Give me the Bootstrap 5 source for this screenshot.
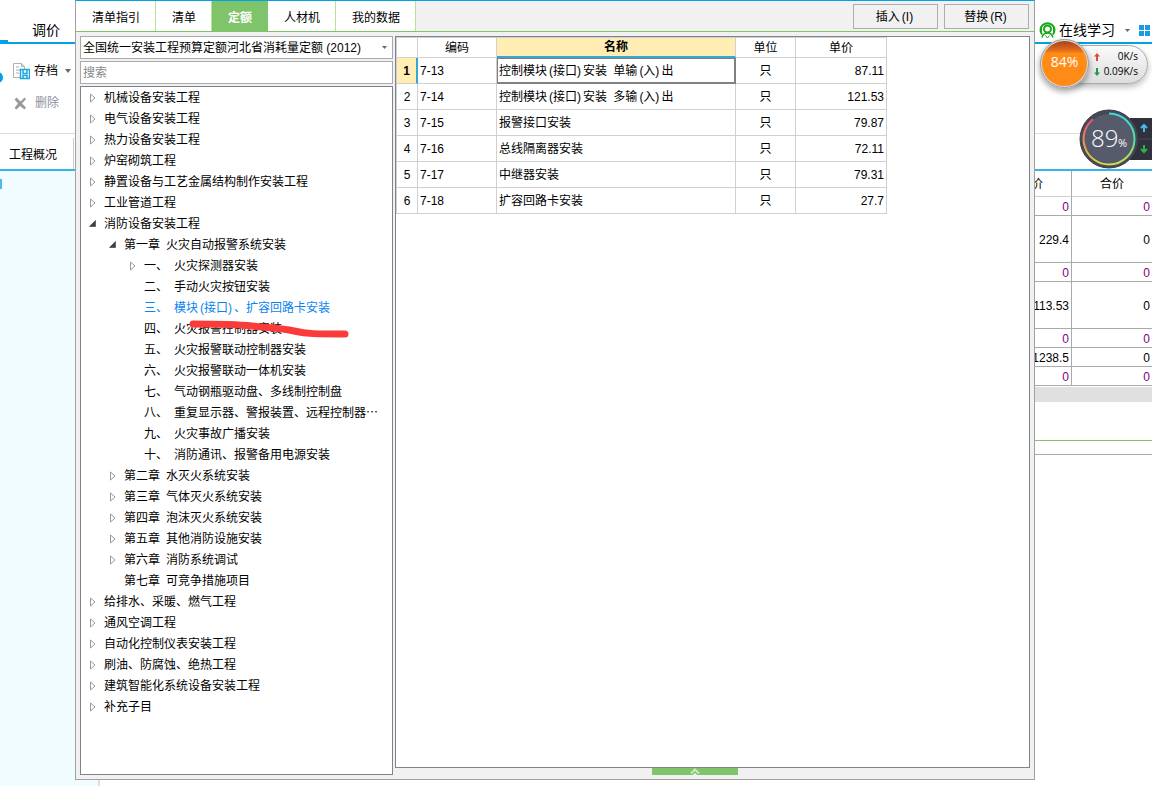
<!DOCTYPE html>
<html lang="zh-CN">
<head>
<meta charset="utf-8">
<meta name="viewport" content="width=device-width, initial-scale=1">
<title>定额查询</title>
<link href="https://cdn.jsdelivr.net/npm/bootstrap@5.3.0/dist/css/bootstrap.min.css" rel="stylesheet">
<style>
:root{--sky:#00a2e8;--leaf:#7fc36b;--line:#d0d0d0;--frame:#7f8390;--ice:#f0fcff}
body{font:12px/20px "Liberation Sans","Noto Sans CJK SC",sans-serif;color:#000;background:#fff}
button,input,select{font:inherit;color:inherit;border-radius:0}
.shell{min-height:100vh}
/* left window strip */
.side-l{width:75px}
.side-l .title-tab{height:44px;border-bottom:2px solid var(--sky);font-size:14px;padding:20px 0 0 32px}
.title-tab::before{content:"";position:absolute;left:0;bottom:0;width:8px;height:2px;background:var(--sky)}
.tools{height:90px;border-bottom:1px solid #ddd;padding:11px 4px 0 13px}
.tools button{height:32px;border:0;background:none;padding:0;text-align:left}
.knob{left:-8px;top:28px;width:11px;height:11px;border-radius:50%;background:var(--sky)}
.proj{height:37px;border-bottom:2px solid #35b4e8;padding:4px 1px 0 0}
.proj a{border-right:1px solid #ccc;padding:7px 0 0 9px;color:#000}
.pane{background:var(--ice)}
.chip{width:2px;height:10px;margin-top:8px;background:#53b7ea}
/* dialog */
.dlg{background:#f1f1f1;border:1px solid #a0a0a0;border-top-color:var(--sky)}
.tabs{height:31px;border-bottom:1px solid var(--leaf)}
.tabs .tab{background:#fff;border:0;border-right:1px solid #b5e39c;padding:4px 15px 0 16px}
.tabs .tab.active{background:var(--leaf);color:#fff;font-weight:bold;border-color:var(--leaf)}
.cmds{gap:6px;padding:3px 5px 0 0}
.cmd{width:85px;height:25px;border:1px solid #adadad;background:#f1f1f1;padding:0}
.work{padding:4px 4px 4px}
.left{width:313px}
.combo,.find{height:23px;border:1px solid #aaa;background:#fff;padding:0 2px;width:100%;outline:0}
.combo{appearance:none;background:#fff url("data:image/svg+xml,%3Csvg xmlns='http://www.w3.org/2000/svg' width='5' height='3'%3E%3Cpath d='M0 0h5L2.5 3z' fill='%23666677'/%3E%3C/svg%3E") no-repeat right 5px center}
.find{margin:2px 0}
.find::placeholder{color:#888;opacity:1}
.tree{border:1px solid var(--frame);background:#fff;padding-top:1px}
.tree ul{list-style:none;margin:0;padding:0 0 0 20px}
.tree>ul{padding-left:8px}
.node{height:21px;display:flex;align-items:center;white-space:nowrap;line-height:21px}
.node::before{content:"";width:15px;height:11px;flex:none}
.node.shut::before{background:url("data:image/svg+xml,%3Csvg xmlns='http://www.w3.org/2000/svg' width='8' height='11'%3E%3Cpath d='M1.5 1v8l4.5-4z' fill='white' stroke='%23999'/%3E%3C/svg%3E") no-repeat}
.node.open::before{background:url("data:image/svg+xml,%3Csvg xmlns='http://www.w3.org/2000/svg' width='8' height='11'%3E%3Cpath d='M6.500 1.500v6H.5z' fill='%23404040' stroke='%23222' stroke-width='.5'/%3E%3C/svg%3E") no-repeat}
.node b{font-weight:normal;margin-right:6px}
.node.on{color:#0a84f0}
.br{margin:0 2px}
.sp{margin-left:3px}
.scrawl{left:105px;top:230px;width:166px;height:26px;pointer-events:none}
.sheet{border:1px solid var(--frame);background:#fff}
.quota{width:491px;table-layout:fixed;border-collapse:separate;border-spacing:0;border-left:1px solid var(--line);border-top:1px solid var(--line)}
.quota th,.quota td{border-right:1px solid var(--line);border-bottom:1px solid var(--line);height:26px;padding:0 2px;font-weight:normal;white-space:nowrap}
.quota thead th{height:20px;line-height:18px;text-align:center}
.quota th{text-align:center;padding:0}
.quota td:nth-child(4){text-align:center}
.quota td:nth-child(5){text-align:right}
.quota thead th.hot{background:#ffedb3;font-weight:bold;border-bottom:2px solid #35a7d7}
.quota tbody th.hot{background:#ffedb3;font-weight:bold;border-right:2px solid #35a7d7}
.quota td.cur{border:2px solid #808080;border-top-width:1px;border-left-width:1px;padding-left:1px}
.grip{width:86px;height:7px;background:var(--leaf);border:0;padding:0}
.under{height:6px}
.under div{width:25px;background:var(--ice);border-right:2px solid #ddd}
/* right window strip */
.side-r{width:117px}
.learn{height:44px;border-bottom:2px solid var(--sky);padding:18px 2px 0 4px;font-size:14px}
.learn a{color:#000;margin-left:3px}
.gap-r{height:90px;border-bottom:1px solid #ddd}
.gap-b{height:37px;border-bottom:2px solid #35b4e8}
.sums{width:163px;flex:none;table-layout:fixed;border-collapse:separate;border-spacing:0}
.sums th{height:26px;font-weight:normal;text-align:center;border-bottom:1px solid var(--line)}
.sums th:first-child{text-align:right;padding-right:28px}
.sums td{height:19px;line-height:16px;padding:2px 2px 0;text-align:right;border-bottom:1px solid #aaa;color:#800080}
.sums tr>:first-child{border-right:1px solid #aaa}
.sums .tall td{height:47px}
.sums .blk td{color:#000}
.bar{height:15px;margin-top:1px;background:#e0e0e0}
.rule-g{height:39px;border-bottom:1px solid var(--leaf)}
.rule-k{height:14px;border-bottom:1px solid #aaa}
.pill{left:26px;top:45px;width:87px;height:39px;border-radius:20px;background:linear-gradient(#fafafa,#ddd);border:1px solid #aaa;box-shadow:0 3px 6px #0004;font:10px/15px "Open Sans","Noto Sans CJK SC",sans-serif;padding:3px 9px 0 0;text-align:right}
.ball{left:5px;top:39px;width:49px;height:49px;border-radius:50%;border:2px solid #ddd;outline:1px solid #999;outline-offset:-1px;background:linear-gradient(#a8401a,#e06a1c 20%,#ff8c14 28%,#ff8a18);box-shadow:0 3px 6px #0006;color:#fff;font:14px/42px "Open Sans",sans-serif;text-align:center}
.dock{left:95px;top:118px;width:22px;height:42px;background:#2f323c}
.dial{left:44px;top:109px;width:60px;height:60px}
.dial span{position:absolute;color:#fff;font-family:"Open Sans",sans-serif;font-weight:300}
.dial .big{left:12px;top:14px;font-size:24px;line-height:30px}
.dial .pc{left:39px;top:25px;font-size:11px;line-height:18px;font-weight:400}
</style>
</head>
<body>
<div class="shell d-flex overflow-hidden">

  <aside class="side-l d-flex flex-column flex-shrink-0">
    <div class="title-tab position-relative">调价</div>
    <div class="tools d-flex flex-column position-relative">
      <i class="knob position-absolute"></i>
      <button class="d-flex align-items-center text-nowrap" type="button">
        <svg width="17" height="17" viewBox="0 0 17 17" class="me-1" fill="none"><path d="M7 14.500H.5V.5h8l3 3V6M8.500.500v3h3M3 4h3M3 7h4M3 10h3" stroke="#b0b0b0"/><path d="M7.500 6.500h9v9h-9z" fill="#fff" stroke="#1aa7dd" stroke-width="1.500"/><path d="M10 7v3.500h4V7M10 15v-2.500h4V15" stroke="#1aa7dd" stroke-width="1.500"/></svg>存档
        <svg width="6" height="4" class="ms-auto"><path d="M0 0h6L3 4z" fill="#667"/></svg>
      </button>
      <button class="d-flex align-items-center text-nowrap" type="button" style="color:#8c90a0">
        <svg width="14" height="13" viewBox="0 0 13 13" class="ms-0 me-2"><path d="M1 2.500 3 .5l4 4 4-4 1.500 1.500-4 4.500 4 4-1.500 2L6.500 9 3 12.500 1 11l3.500-4.500z" fill="#999"/></svg>删除
      </button>
    </div>
    <div class="proj d-flex"><a href="#" class="flex-fill text-decoration-none text-nowrap">工程概况</a></div>
    <div class="pane flex-fill"><div class="chip"></div></div>
  </aside>

  <main class="flex-fill d-flex flex-column">
    <section class="dlg flex-fill d-flex flex-column">
      <nav class="tabs d-flex">
        <button class="tab" type="button">清单指引</button>
        <button class="tab" type="button">清单</button>
        <button class="tab active" type="button">定额</button>
        <button class="tab" type="button">人材机</button>
        <button class="tab" type="button">我的数据</button>
        <div class="cmds ms-auto d-flex align-items-start">
          <button class="cmd" type="button">插入<span class="br">(I)</span></button>
          <button class="cmd" type="button">替换<span class="br">(R)</span></button>
        </div>
      </nav>
      <div class="work flex-fill d-flex" style="gap:2px">
        <div class="left d-flex flex-column flex-shrink-0">
          <select class="combo" aria-label="定额库"><option>全国统一安装工程预算定额河北省消耗量定额 (2012)</option></select>
          <input class="find" type="text" placeholder="搜索" aria-label="搜索">
          <div class="tree flex-fill position-relative">
            <ul>
              <li><div class="node shut">机械设备安装工程</div></li>
              <li><div class="node shut">电气设备安装工程</div></li>
              <li><div class="node shut">热力设备安装工程</div></li>
              <li><div class="node shut">炉窑砌筑工程</div></li>
              <li><div class="node shut">静置设备与工艺金属结构制作安装工程</div></li>
              <li><div class="node shut">工业管道工程</div></li>
              <li><div class="node open">消防设备安装工程</div>
                <ul>
                  <li><div class="node open"><b>第一章</b>火灾自动报警系统安装</div>
                    <ul>
                      <li><div class="node shut"><b>一、</b>火灾探测器安装</div></li>
                      <li><div class="node"><b>二、</b>手动火灾按钮安装</div></li>
                      <li><div class="node on"><b>三、</b>模块<span class="br">(接口)</span>、扩容回路卡安装</div></li>
                      <li><div class="node"><b>四、</b>火灾报警控制器安装</div></li>
                      <li><div class="node"><b>五、</b>火灾报警联动控制器安装</div></li>
                      <li><div class="node"><b>六、</b>火灾报警联动一体机安装</div></li>
                      <li><div class="node"><b>七、</b>气动钢瓶驱动盘、多线制控制盘</div></li>
                      <li><div class="node"><b>八、</b>重复显示器、警报装置、远程控制器⋯</div></li>
                      <li><div class="node"><b>九、</b>火灾事故广播安装</div></li>
                      <li><div class="node"><b>十、</b>消防通讯、报警备用电源安装</div></li>
                    </ul>
                  </li>
                  <li><div class="node shut"><b>第二章</b>水灭火系统安装</div></li>
                  <li><div class="node shut"><b>第三章</b>气体灭火系统安装</div></li>
                  <li><div class="node shut"><b>第四章</b>泡沫灭火系统安装</div></li>
                  <li><div class="node shut"><b>第五章</b>其他消防设施安装</div></li>
                  <li><div class="node shut"><b>第六章</b>消防系统调试</div></li>
                  <li><div class="node"><b>第七章</b>可竞争措施项目</div></li>
                </ul>
              </li>
              <li><div class="node shut">给排水、采暖、燃气工程</div></li>
              <li><div class="node shut">通风空调工程</div></li>
              <li><div class="node shut">自动化控制仪表安装工程</div></li>
              <li><div class="node shut">刷油、防腐蚀、绝热工程</div></li>
              <li><div class="node shut">建筑智能化系统设备安装工程</div></li>
              <li><div class="node shut">补充子目</div></li>
            </ul>
            <!-- hand-drawn marker stroke -->
            <svg class="scrawl position-absolute" viewBox="0 0 166 26"><path d="M7 7C30 7 48 7 66 9S95 11 108 14 130 17 159 17" fill="none" stroke="#fb3a3a" stroke-width="7" stroke-linecap="round"/></svg>
          </div>
        </div>
        <div class="flex-fill d-flex flex-column">
          <div class="sheet flex-fill">
            <table class="quota">
              <colgroup><col style="width:21px"><col style="width:79px"><col style="width:239px"><col style="width:60px"><col></colgroup>
              <thead><tr><th></th><th>编码</th><th class="hot">名称</th><th>单位</th><th>单价</th></tr></thead>
              <tbody>
                <tr><th class="hot">1</th><td>7-13</td><td class="cur">控制模块<span class="br">(接口)</span>安装 <span class="sp">单输</span><span class="br">(入)</span>出</td><td>只</td><td>87.11</td></tr>
                <tr><th>2</th><td>7-14</td><td>控制模块<span class="br">(接口)</span>安装 <span class="sp">多输</span><span class="br">(入)</span>出</td><td>只</td><td>121.53</td></tr>
                <tr><th>3</th><td>7-15</td><td>报警接口安装</td><td>只</td><td>79.87</td></tr>
                <tr><th>4</th><td>7-16</td><td>总线隔离器安装</td><td>只</td><td>72.11</td></tr>
                <tr><th>5</th><td>7-17</td><td>中继器安装</td><td>只</td><td>79.31</td></tr>
                <tr><th>6</th><td>7-18</td><td>扩容回路卡安装</td><td>只</td><td>27.7</td></tr>
              </tbody>
            </table>
          </div>
          <div class="d-flex" style="padding-left:257px">
            <button class="grip d-flex justify-content-center" type="button" aria-label="展开"><svg width="10" height="7"><path d="M1 5.500 5 1.500l4 4" fill="none" stroke="#c8e8be" stroke-width="2"/><path d="M3 7l2-2 2 2z" fill="#fff"/></svg></button>
          </div>
        </div>
      </div>
    </section>
    <div class="under d-flex"><div></div></div>
  </main>

  <aside class="side-r flex-shrink-0 position-relative">
    <div class="learn d-flex align-items-center">
      <svg width="17" height="18" viewBox="0 0 17 18" fill="none" stroke="#18a818"><path d="M3 13.500a7 7 0 1 1 11 0" stroke-width="2"/><circle cx="8.500" cy="8" r="3.500" stroke-width="2"/><path d="M2 6v5M15 6v5" stroke-width="2"/><path d="M3 16.500c1-4 4-4.500 5.500-4.500s4.500.5 5.500 4.500" stroke-width="1.500"/><path d="M6.500 14.500 8.500 17l2-2.500" /></svg>
      <a href="#" class="text-decoration-none text-nowrap">在线学习</a>
      <svg width="5" height="3" class="ms-auto"><path d="M0 0h5L2.500 3z" fill="#667"/></svg>
      <svg width="11" height="11" class="ms-auto"><path d="M0 0h5v5H0zM6 0h5v5H6zM0 6h5v5H0zM6 6h5v5H6z" fill="#1a9de0"/></svg>
    </div>
    <div class="gap-r"></div>
    <div class="gap-b"></div>
    <div class="d-flex justify-content-end overflow-hidden">
      <table class="sums">
        <colgroup><col><col style="width:80px"></colgroup>
        <thead><tr><th>价</th><th>合价</th></tr></thead>
        <tbody>
          <tr><td>0</td><td>0</td></tr>
          <tr class="tall blk"><td>229.4</td><td>0</td></tr>
          <tr><td>0</td><td>0</td></tr>
          <tr class="tall blk"><td>113.53</td><td>0</td></tr>
          <tr><td>0</td><td>0</td></tr>
          <tr class="blk"><td>1238.5</td><td>0</td></tr>
          <tr><td>0</td><td>0</td></tr>
        </tbody>
      </table>
    </div>
    <div class="bar"></div>
    <div class="rule-g"></div>
    <div class="rule-k"></div>

    <!-- floating speed monitors -->
    <div class="pill position-absolute">
      <svg class="position-absolute" style="left:31px;top:6px" width="8" height="26"><path d="M4 1 7 4.500H5V9H3V4.500H1z" fill="#e04a3a"/><path d="M4 24l3-3.500H5V16H3v4.500H1z" fill="#1c9a4a"/></svg>
      0K/s<br>0.09K/s
    </div>
    <div class="ball position-absolute">84%</div>
    <div class="dock position-absolute"><svg width="22" height="42" fill="none" stroke-width="2"><path d="M0 21h22" stroke="#444856" stroke-width="1"/><path d="M14 14V8M11 10l3-3 3 3" stroke="#4ab8f0"/><path d="M14 27v7M11 31l3 3 3-3" stroke="#2eb04a"/></svg></div>
    <div class="dial position-absolute">
      <svg width="60" height="60" viewBox="0 0 60 60" fill="none" stroke-width="2">
        <defs>
          <linearGradient id="a" x1="0" y1="0" x2="0" y2="1"><stop offset="0" stop-color="#3fd8dc"/><stop offset=".5" stop-color="#4ee0a0"/><stop offset="1" stop-color="#d8d84a"/></linearGradient>
          <linearGradient id="b" x1="0" y1="0" x2="0" y2="1"><stop offset="0" stop-color="#f0507a"/><stop offset=".5" stop-color="#f09050"/><stop offset="1" stop-color="#d8d84a"/></linearGradient>
        </defs>
        <circle cx="30" cy="30" r="29" fill="#454955" stroke="#3a3d48" stroke-width="1"/>
        <circle cx="30" cy="30" r="25" fill="#565b6b"/>
        <path d="M30 4.500a25.500 25.500 0 0 1 0 51" stroke="url(#a)"/>
        <path d="M30 55.500A25.500 25.500 0 0 1 14 10.200" stroke="url(#b)"/>
      </svg>
      <span class="big">89</span><span class="pc">%</span>
    </div>
  </aside>
</div>
<script src="https://cdn.jsdelivr.net/npm/bootstrap@5.3.0/dist/js/bootstrap.bundle.min.js"></script>
</body>
</html>
